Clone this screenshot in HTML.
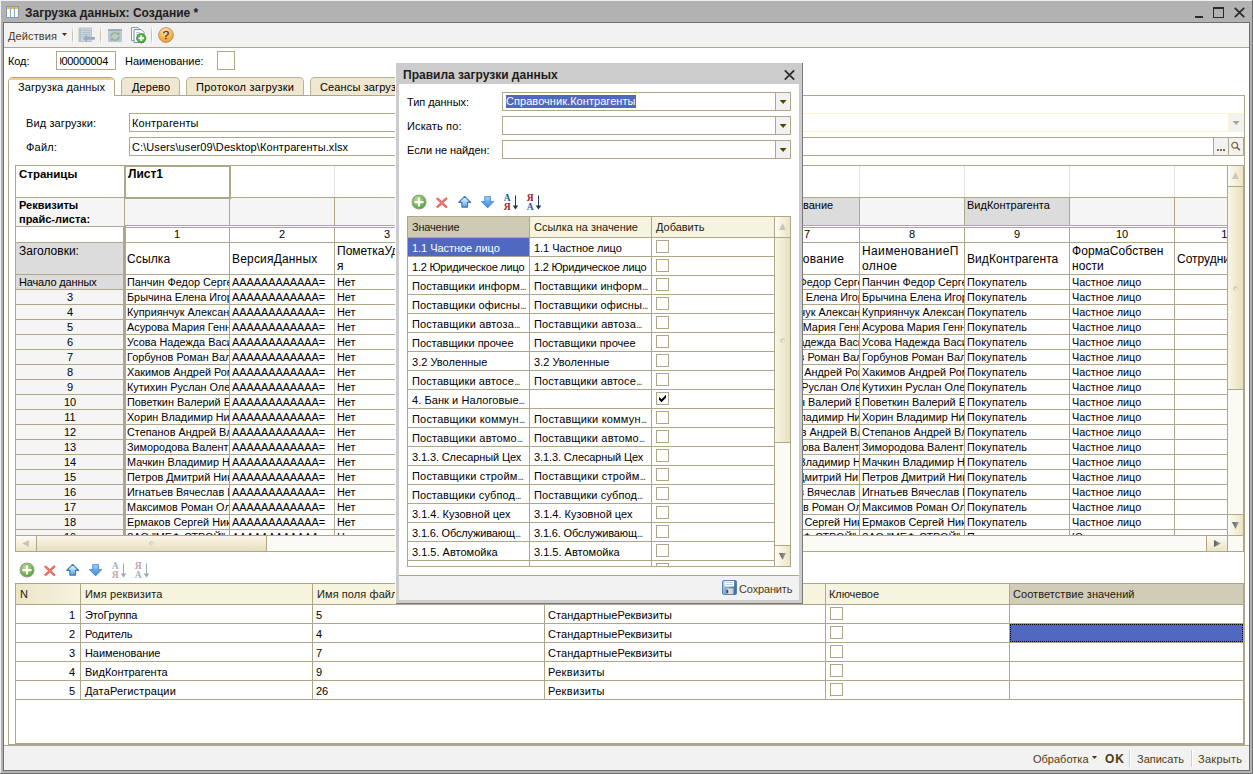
<!DOCTYPE html><html lang="ru"><head><meta charset="utf-8"><title>1C</title><style>
html,body{margin:0;padding:0}
body{width:1253px;height:774px;overflow:hidden;background:#b2b2b2;font-family:"Liberation Sans",sans-serif;font-size:11px;color:#000}
#root{position:relative;width:1253px;height:774px;overflow:hidden;background:#b2b2b2}
#root div,#root svg{position:absolute;box-sizing:content-box}
.t{white-space:nowrap}
</style></head><body><div id="root">
<div style="left:0px;top:0px;width:1253px;height:1px;background:#f0f0f0"></div>
<div style="left:0px;top:0px;width:1px;height:774px;background:#f0f0f0"></div>
<div style="left:1252px;top:0px;width:1px;height:774px;background:#6e6e6e"></div>
<div style="left:0px;top:773px;width:1253px;height:1px;background:#6e6e6e"></div>
<svg style="left:6px;top:6px" width="13" height="12" viewBox="0 0 13 12">
<rect x="0.5" y="0.5" width="12" height="11" fill="#f4f8fc" stroke="#8a98a6" stroke-width="1"/>
<rect x="1" y="1" width="3" height="2" fill="#f2c21a"/><rect x="5" y="1" width="3" height="2" fill="#f2c21a"/><rect x="9" y="1" width="3" height="2" fill="#f2c21a"/>
<path d="M4.5 0.5v11M8.5 0.5v11" stroke="#9aa6b2" stroke-width="1"/></svg>
<div class="t" style="left:25px;top:5px;font-weight:bold;font-size:12px;line-height:16px;color:#1c1c1c">Загрузка данных: Создание *</div>
<div style="left:1195px;top:16px;width:8px;height:2px;background:#2a2a2a"></div>
<div style="left:1213px;top:7px;width:11px;height:11px;border:1px solid #2a2a2a;border-top-width:2px;box-sizing:border-box"></div>
<svg style="left:1233px;top:6px" width="13" height="13" viewBox="0 0 13 13"><path d="M1.8 1.8l9.4 9.4M11.2 1.8l-9.4 9.4" stroke="#2a2a2a" stroke-width="1.7"/></svg>
<div style="left:3px;top:22px;width:1245px;height:747px;border:1px solid #6e6e6e;background:#fff"></div>
<div style="left:4px;top:23px;width:1245px;height:24px;background:#f2f2f2"></div>
<div style="left:4px;top:47px;width:1245px;height:1px;background:#aea888"></div>
<div class="t" style="left:8px;top:28px;color:#4c3b12;line-height:16px;letter-spacing:0.114px">Действия</div>
<svg style="left:62px;top:33px" width="5" height="3"><path d="M0 0h5l-2.500 3z" fill="#4a3500"/></svg>
<div style="left:72px;top:26px;width:1px;height:19px;background:linear-gradient(180deg,#f2f2f2,#c9c2a0 35%,#c9c2a0 65%,#f2f2f2)"></div>
<div style="left:73px;top:27px;width:1px;height:17px;background:#fbfbfb"></div>
<div style="left:100px;top:26px;width:1px;height:19px;background:linear-gradient(180deg,#f2f2f2,#c9c2a0 35%,#c9c2a0 65%,#f2f2f2)"></div>
<div style="left:101px;top:27px;width:1px;height:17px;background:#fbfbfb"></div>
<div style="left:151px;top:26px;width:1px;height:19px;background:linear-gradient(180deg,#f2f2f2,#c9c2a0 35%,#c9c2a0 65%,#f2f2f2)"></div>
<div style="left:152px;top:27px;width:1px;height:17px;background:#fbfbfb"></div>
<svg style="left:78px;top:27px" width="18" height="17" viewBox="0 0 18 17">
<rect x="1" y="1" width="12.500" height="13.500" fill="#cdd6dd" stroke="#b3bec7" stroke-width="0.800"/>
<rect x="1" y="1" width="2" height="13.500" fill="#b5c1cb"/>
<path d="M3.500 3.500h9M3.500 5.500h9M3.500 7.500h9M3.500 9.500h9" stroke="#b0bcc6" stroke-width="0.900"/>
<path d="M17 10H9V7.600L5 11.400 9 15.200V12.800h8z" fill="#9bacb9"/></svg>
<svg style="left:108px;top:29px" width="14" height="13" viewBox="0 0 14 13">
<rect x="0" y="0" width="14" height="13" fill="#bfc8cf"/><rect x="0" y="0" width="14" height="2" fill="#9fadb8"/>
<path d="M2.800 7.600a4.200 3.800 0 0 1 7.400-2.300M11.200 7.400a4.200 3.800 0 0 1-7.400 2.300" stroke="#8db08d" stroke-width="1.300" fill="none"/>
<path d="M8.600 5.800l3.400 0-1.400-2.800zM5.400 9.200l-3.400 0 1.400 2.800z" fill="#8db08d"/></svg>
<svg style="left:130px;top:26px" width="17" height="18" viewBox="0 0 17 18">
<path d="M1.500 1.500h6.500l2.500 2.500v10.500h-9z" fill="#fff" stroke="#7f9bbb"/>
<path d="M4 3.500h7l3 3v10h-10z" fill="#fdfeff" stroke="#6f8db3"/>
<path d="M6 6.500h4M6 8.500h3" stroke="#b9c8d8"/>
<circle cx="11.200" cy="12.200" r="4.600" fill="#58b046" stroke="#3f8a33" stroke-width="0.900"/>
<path d="M11.200 9.400v5.600M8.400 12.200h5.600" stroke="#fff" stroke-width="1.900"/></svg>
<svg style="left:158px;top:27px" width="16" height="16" viewBox="0 0 16 16">
<defs><radialGradient id="gh" cx="0.450" cy="0.250" r="0.850"><stop offset="0" stop-color="#fde9c4"/><stop offset="0.500" stop-color="#f6b85a"/><stop offset="1" stop-color="#e8962a"/></radialGradient></defs>
<circle cx="8" cy="8" r="7.400" fill="url(#gh)" stroke="#b58748" stroke-width="0.800"/>
<text x="8" y="12" text-anchor="middle" font-family="Liberation Sans" font-size="11.500" fill="#5a3510" stroke="#5a3510" stroke-width="0.300">?</text></svg>
<div class="t" style="left:8px;top:54px;line-height:14px;letter-spacing:-0.089px">Код:</div>
<div style="left:56px;top:51px;width:58px;height:17px;border:1px solid #aea888;background:#fff;overflow:hidden"><div style="left:3px;top:0;width:55px;height:17px;overflow:hidden"><div class="t" style="right:7px;top:2px;line-height:14px;font-size:11px;letter-spacing:-0.300px">000000004</div></div></div>
<div class="t" style="left:125px;top:54px;line-height:14px;letter-spacing:-0.068px">Наименование:</div>
<div style="left:217px;top:51px;width:16px;height:17px;border:1px solid #aea888;background:#fff"></div>
<div style="left:8px;top:95px;width:1235px;height:648px;border:1px solid #aea888;background:#fff"></div>
<div style="left:121px;top:77px;width:57px;height:17px;border:1px solid #b9b291;border-bottom:none;border-radius:5px 5px 0 0;background:#eee8d2"><div class="t" style="left:10px;top:2px;line-height:14px;letter-spacing:0.072px">Дерево</div></div>
<div style="left:186px;top:77px;width:116px;height:17px;border:1px solid #b9b291;border-bottom:none;border-radius:5px 5px 0 0;background:#eee8d2"><div class="t" style="left:9px;top:2px;line-height:14px;letter-spacing:0.257px">Протокол загрузки</div></div>
<div style="left:310px;top:77px;width:138px;height:17px;border:1px solid #b9b291;border-bottom:none;border-radius:5px 5px 0 0;background:#eee8d2"><div class="t" style="left:9px;top:2px;line-height:14px;letter-spacing:0.13px">Сеансы загрузки</div></div>
<div style="left:8px;top:77px;width:105px;height:18px;border:1px solid #aea888;border-bottom:none;border-radius:5px 5px 0 0;background:#fff;overflow:hidden"><div style="left:0;top:0;width:107px;height:2px;background:#f6cf7e"></div><div class="t" style="left:9px;top:2px;line-height:14px;letter-spacing:0.097px">Загрузка данных</div></div>
<div class="t" style="left:26px;top:116px;line-height:14px;letter-spacing:0.109px">Вид загрузки:</div>
<div style="left:129px;top:113px;width:1113px;height:17px;border:1px solid #fdf3cf;background:#fff"></div>
<div style="left:129px;top:113px;width:300px;height:17px;border:1px solid #aea888;border-right:none;background:#fff"></div>
<div class="t" style="left:132px;top:116px;line-height:14px;letter-spacing:0.172px">Контрагенты</div>
<div style="left:1228px;top:114px;width:14px;height:17px;background:#f2f2f2;border-left:1px solid #fdf3cf"><svg width="14" height="17" style="left:0;top:0"><path d="M3.600 7.0h7l-3.500 4z" fill="#aaa692"/></svg></div>
<div class="t" style="left:26px;top:140px;line-height:14px;letter-spacing:0.223px">Файл:</div>
<div style="left:129px;top:137px;width:1113px;height:17px;border:1px solid #aea888;background:#fff"></div>
<div class="t" style="left:132px;top:140px;line-height:14px;letter-spacing:0.084px">C:\Users\user09\Desktop\Контрагенты.xlsx</div>
<div style="left:1213px;top:138px;width:14px;height:17px;background:#f2f2f2;border-left:1px solid #aea888"><div style="left:3px;top:11px;width:2px;height:2px;background:#8a6a30"></div><div style="left:6px;top:11px;width:2px;height:2px;background:#8a6a30"></div><div style="left:9px;top:11px;width:2px;height:2px;background:#8a6a30"></div></div>
<div style="left:1228px;top:138px;width:14px;height:17px;background:#f2f2f2;border-left:1px solid #aea888"><svg width="14" height="17" style="left:0;top:0"><circle cx="5.700" cy="7.200" r="2.900" fill="#fbfaf6" stroke="#8a6230" stroke-width="1.200"/><path d="M7.900 9.400l3 2.700" stroke="#8a6230" stroke-width="1.700"/></svg></div>
<div style="left:15px;top:165px;width:1227px;height:385px;border:1px solid #aea888;background:#fff"></div>
<div style="left:16px;top:166px;width:1211px;height:369px;overflow:hidden;background:#fff">
<div style="left:0px;top:32px;width:1212px;height:27px;background:#f5f5f5"></div>
<div style="left:0px;top:32px;width:107px;height:28px;background:#f5f5f5"></div>
<div style="left:0px;top:124px;width:107px;height:300px;background:#f5f5f5"></div>
<div style="left:0px;top:77px;width:107px;height:46px;background:#dcdcdc"></div>
<div style="left:739px;top:32px;width:104px;height:27px;background:#dcdcdc"></div>
<div style="left:949px;top:32px;width:104px;height:27px;background:#dcdcdc"></div>
<div style="left:0px;top:31px;width:1212px;height:1px;background:#aea888"></div>
<div style="left:108px;top:59px;width:1212px;height:1px;background:#aea888"></div>
<div style="left:0px;top:60px;width:108px;height:1px;background:#aea888"></div>
<div style="left:108px;top:61px;width:1212px;height:1px;background:#aea888"></div>
<div style="left:0px;top:76px;width:1212px;height:1px;background:#aea888"></div>
<div style="left:108px;top:108px;width:1212px;height:1px;background:#aea888"></div>
<div style="left:0px;top:108px;width:108px;height:1px;background:#aea888"></div>
<div style="left:0px;top:123px;width:1212px;height:1px;background:#aea888"></div>
<div style="left:0px;top:138px;width:1212px;height:1px;background:#aea888"></div>
<div style="left:0px;top:153px;width:1212px;height:1px;background:#aea888"></div>
<div style="left:0px;top:168px;width:1212px;height:1px;background:#aea888"></div>
<div style="left:0px;top:183px;width:1212px;height:1px;background:#aea888"></div>
<div style="left:0px;top:198px;width:1212px;height:1px;background:#aea888"></div>
<div style="left:0px;top:213px;width:1212px;height:1px;background:#aea888"></div>
<div style="left:0px;top:228px;width:1212px;height:1px;background:#aea888"></div>
<div style="left:0px;top:243px;width:1212px;height:1px;background:#aea888"></div>
<div style="left:0px;top:258px;width:1212px;height:1px;background:#aea888"></div>
<div style="left:0px;top:273px;width:1212px;height:1px;background:#aea888"></div>
<div style="left:0px;top:288px;width:1212px;height:1px;background:#aea888"></div>
<div style="left:0px;top:303px;width:1212px;height:1px;background:#aea888"></div>
<div style="left:0px;top:318px;width:1212px;height:1px;background:#aea888"></div>
<div style="left:0px;top:333px;width:1212px;height:1px;background:#aea888"></div>
<div style="left:0px;top:348px;width:1212px;height:1px;background:#aea888"></div>
<div style="left:0px;top:363px;width:1212px;height:1px;background:#aea888"></div>
<div style="left:213px;top:0px;width:1px;height:31px;background:#e2e2e2"></div>
<div style="left:213px;top:32px;width:1px;height:27px;background:#aea888"></div>
<div style="left:213px;top:61px;width:1px;height:320px;background:#aea888"></div>
<div style="left:318px;top:0px;width:1px;height:31px;background:#e2e2e2"></div>
<div style="left:318px;top:32px;width:1px;height:27px;background:#aea888"></div>
<div style="left:318px;top:61px;width:1px;height:320px;background:#aea888"></div>
<div style="left:423px;top:0px;width:1px;height:31px;background:#e2e2e2"></div>
<div style="left:423px;top:32px;width:1px;height:27px;background:#aea888"></div>
<div style="left:423px;top:61px;width:1px;height:320px;background:#aea888"></div>
<div style="left:528px;top:0px;width:1px;height:31px;background:#e2e2e2"></div>
<div style="left:528px;top:32px;width:1px;height:27px;background:#aea888"></div>
<div style="left:528px;top:61px;width:1px;height:320px;background:#aea888"></div>
<div style="left:633px;top:0px;width:1px;height:31px;background:#e2e2e2"></div>
<div style="left:633px;top:32px;width:1px;height:27px;background:#aea888"></div>
<div style="left:633px;top:61px;width:1px;height:320px;background:#aea888"></div>
<div style="left:738px;top:0px;width:1px;height:31px;background:#e2e2e2"></div>
<div style="left:738px;top:32px;width:1px;height:27px;background:#aea888"></div>
<div style="left:738px;top:61px;width:1px;height:320px;background:#aea888"></div>
<div style="left:843px;top:0px;width:1px;height:31px;background:#e2e2e2"></div>
<div style="left:843px;top:32px;width:1px;height:27px;background:#aea888"></div>
<div style="left:843px;top:61px;width:1px;height:320px;background:#aea888"></div>
<div style="left:948px;top:0px;width:1px;height:31px;background:#e2e2e2"></div>
<div style="left:948px;top:32px;width:1px;height:27px;background:#aea888"></div>
<div style="left:948px;top:61px;width:1px;height:320px;background:#aea888"></div>
<div style="left:1053px;top:0px;width:1px;height:31px;background:#e2e2e2"></div>
<div style="left:1053px;top:32px;width:1px;height:27px;background:#aea888"></div>
<div style="left:1053px;top:61px;width:1px;height:320px;background:#aea888"></div>
<div style="left:1158px;top:0px;width:1px;height:31px;background:#e2e2e2"></div>
<div style="left:1158px;top:32px;width:1px;height:27px;background:#aea888"></div>
<div style="left:1158px;top:61px;width:1px;height:320px;background:#aea888"></div>
<div style="left:1263px;top:0px;width:1px;height:31px;background:#e2e2e2"></div>
<div style="left:1263px;top:32px;width:1px;height:27px;background:#aea888"></div>
<div style="left:1263px;top:61px;width:1px;height:320px;background:#aea888"></div>
<div style="left:107px;top:60px;width:3px;height:320px;background:#aea888"></div>
<div style="left:108px;top:32px;width:1px;height:28px;background:#aea888"></div>
<div style="left:108px;top:-1px;width:103px;height:30px;border:2px solid #aea888;background:#fff"></div>
<div class="t" style="left:3px;top:1px;font-weight:bold;font-size:11.500px;line-height:15px">Страницы</div>
<div class="t" style="left:112px;top:1px;font-weight:bold;font-size:12px;line-height:15px">Лист1</div>
<div class="t" style="left:3px;top:32px;font-weight:bold;font-size:11px;line-height:14px">Реквизиты<br>прайс-листа:</div>
<div class="t" style="left:3px;top:78px;font-size:12px;line-height:15px">Заголовки:</div>
<div class="t" style="left:3px;top:109px;font-size:11px;line-height:14px;letter-spacing:-0.15px">Начало данных</div>
<div class="t" style="left:739px;top:33px;width:103px;font-size:11px;line-height:14px;text-align:right;overflow:hidden;direction:rtl"></div>
<div class="t" style="left:951px;top:32px;font-size:11px;line-height:14px">ВидКонтрагента</div>
<div class="t" style="left:787px;top:32px;font-size:11px;line-height:14px">вание</div>
<div class="t" style="left:109px;top:61px;width:104px;text-align:center;font-size:11px;line-height:14px">1</div>
<div class="t" style="left:214px;top:61px;width:104px;text-align:center;font-size:11px;line-height:14px">2</div>
<div class="t" style="left:319px;top:61px;width:104px;text-align:center;font-size:11px;line-height:14px">3</div>
<div class="t" style="left:424px;top:61px;width:104px;text-align:center;font-size:11px;line-height:14px">4</div>
<div class="t" style="left:529px;top:61px;width:104px;text-align:center;font-size:11px;line-height:14px">5</div>
<div class="t" style="left:634px;top:61px;width:104px;text-align:center;font-size:11px;line-height:14px">6</div>
<div class="t" style="left:739px;top:61px;width:104px;text-align:center;font-size:11px;line-height:14px">7</div>
<div class="t" style="left:844px;top:61px;width:104px;text-align:center;font-size:11px;line-height:14px">8</div>
<div class="t" style="left:949px;top:61px;width:104px;text-align:center;font-size:11px;line-height:14px">9</div>
<div class="t" style="left:1054px;top:61px;width:104px;text-align:center;font-size:11px;line-height:14px">10</div>
<div class="t" style="left:1159px;top:61px;width:104px;text-align:center;font-size:11px;line-height:14px">11</div>
<div class="t" style="left:111px;top:86px;width:102px;overflow:hidden;font-size:12px;line-height:15px;letter-spacing:0.143px">Ссылка</div>
<div class="t" style="left:216px;top:86px;width:102px;overflow:hidden;font-size:12px;line-height:15px;letter-spacing:0.179px">ВерсияДанных</div>
<div class="t" style="left:321px;top:78px;width:102px;overflow:hidden;font-size:12px;line-height:15px;letter-spacing:0px">ПометкаУдалени<br>я</div>
<div class="t" style="left:426px;top:86px;width:102px;overflow:hidden;font-size:12px;line-height:15px;letter-spacing:0px"></div>
<div class="t" style="left:531px;top:86px;width:102px;overflow:hidden;font-size:12px;line-height:15px;letter-spacing:0px"></div>
<div class="t" style="left:636px;top:86px;width:102px;overflow:hidden;font-size:12px;line-height:15px;letter-spacing:0px"></div>
<div class="t" style="left:741px;top:86px;width:102px;overflow:hidden;font-size:12px;line-height:15px;letter-spacing:0.347px">Наименование</div>
<div class="t" style="left:846px;top:78px;width:102px;overflow:hidden;font-size:12px;line-height:15px;letter-spacing:0.374px">НаименованиеП<br>олное</div>
<div class="t" style="left:951px;top:86px;width:102px;overflow:hidden;font-size:12px;line-height:15px;letter-spacing:0.077px">ВидКонтрагента</div>
<div class="t" style="left:1056px;top:78px;width:102px;overflow:hidden;font-size:12px;line-height:15px;letter-spacing:0.082px">ФормаСобствен<br>ности</div>
<div class="t" style="left:1161px;top:86px;width:102px;overflow:hidden;font-size:12px;line-height:15px;letter-spacing:0px">Сотрудник</div>
<div class="t" style="left:111px;top:109px;width:102px;overflow:hidden;font-size:10.850px;line-height:14px;letter-spacing:0px">Панчин Федор Сергеевич</div>
<div class="t" style="left:216px;top:109px;width:102px;overflow:hidden;font-size:10.850px;line-height:14px;letter-spacing:0px">AAAAAAAAAAAA=</div>
<div class="t" style="left:321px;top:109px;width:102px;overflow:hidden;font-size:10.850px;line-height:14px;letter-spacing:0px">Нет</div>
<div style="left:739px;top:109px;width:104px;height:14px;overflow:hidden"><div class="t" style="left:3px;top:0;font-size:10.850px;line-height:14px">Панчин Федор Сергеевич</div></div>
<div class="t" style="left:846px;top:109px;width:102px;overflow:hidden;font-size:10.850px;line-height:14px;letter-spacing:0px">Панчин Федор Сергеевич</div>
<div class="t" style="left:951px;top:109px;width:102px;overflow:hidden;font-size:10.850px;line-height:14px;letter-spacing:0.191px">Покупатель</div>
<div class="t" style="left:1056px;top:109px;width:102px;overflow:hidden;font-size:10.850px;line-height:14px;letter-spacing:0px">Частное лицо</div>
<div class="t" style="left:0px;top:124px;width:108px;text-align:center;font-size:11px;line-height:14px">3</div>
<div class="t" style="left:111px;top:124px;width:102px;overflow:hidden;font-size:10.850px;line-height:14px;letter-spacing:0px">Брычина Елена Игоревна</div>
<div class="t" style="left:216px;top:124px;width:102px;overflow:hidden;font-size:10.850px;line-height:14px;letter-spacing:0px">AAAAAAAAAAAA=</div>
<div class="t" style="left:321px;top:124px;width:102px;overflow:hidden;font-size:10.850px;line-height:14px;letter-spacing:0px">Нет</div>
<div style="left:739px;top:124px;width:104px;height:14px;overflow:hidden"><div class="t" style="left:3px;top:0;font-size:10.850px;line-height:14px">Брычина Елена Игоревна</div></div>
<div class="t" style="left:846px;top:124px;width:102px;overflow:hidden;font-size:10.850px;line-height:14px;letter-spacing:0px">Брычина Елена Игоревна</div>
<div class="t" style="left:951px;top:124px;width:102px;overflow:hidden;font-size:10.850px;line-height:14px;letter-spacing:0.191px">Покупатель</div>
<div class="t" style="left:1056px;top:124px;width:102px;overflow:hidden;font-size:10.850px;line-height:14px;letter-spacing:0px">Частное лицо</div>
<div class="t" style="left:0px;top:139px;width:108px;text-align:center;font-size:11px;line-height:14px">4</div>
<div class="t" style="left:111px;top:139px;width:102px;overflow:hidden;font-size:10.850px;line-height:14px;letter-spacing:0px">Куприянчук Александр</div>
<div class="t" style="left:216px;top:139px;width:102px;overflow:hidden;font-size:10.850px;line-height:14px;letter-spacing:0px">AAAAAAAAAAAA=</div>
<div class="t" style="left:321px;top:139px;width:102px;overflow:hidden;font-size:10.850px;line-height:14px;letter-spacing:0px">Нет</div>
<div style="left:739px;top:139px;width:104px;height:14px;overflow:hidden"><div class="t" style="left:3px;top:0;font-size:10.850px;line-height:14px">Куприянчук Александр</div></div>
<div class="t" style="left:846px;top:139px;width:102px;overflow:hidden;font-size:10.850px;line-height:14px;letter-spacing:0px">Куприянчук Александр</div>
<div class="t" style="left:951px;top:139px;width:102px;overflow:hidden;font-size:10.850px;line-height:14px;letter-spacing:0.191px">Покупатель</div>
<div class="t" style="left:1056px;top:139px;width:102px;overflow:hidden;font-size:10.850px;line-height:14px;letter-spacing:0px">Частное лицо</div>
<div class="t" style="left:0px;top:154px;width:108px;text-align:center;font-size:11px;line-height:14px">5</div>
<div class="t" style="left:111px;top:154px;width:102px;overflow:hidden;font-size:10.850px;line-height:14px;letter-spacing:0px">Асурова Мария Геннадьевна</div>
<div class="t" style="left:216px;top:154px;width:102px;overflow:hidden;font-size:10.850px;line-height:14px;letter-spacing:0px">AAAAAAAAAAAA=</div>
<div class="t" style="left:321px;top:154px;width:102px;overflow:hidden;font-size:10.850px;line-height:14px;letter-spacing:0px">Нет</div>
<div style="left:739px;top:154px;width:104px;height:14px;overflow:hidden"><div class="t" style="left:3px;top:0;font-size:10.850px;line-height:14px">Асурова Мария Геннадьевна</div></div>
<div class="t" style="left:846px;top:154px;width:102px;overflow:hidden;font-size:10.850px;line-height:14px;letter-spacing:0px">Асурова Мария Геннадьевна</div>
<div class="t" style="left:951px;top:154px;width:102px;overflow:hidden;font-size:10.850px;line-height:14px;letter-spacing:0.191px">Покупатель</div>
<div class="t" style="left:1056px;top:154px;width:102px;overflow:hidden;font-size:10.850px;line-height:14px;letter-spacing:0px">Частное лицо</div>
<div class="t" style="left:0px;top:169px;width:108px;text-align:center;font-size:11px;line-height:14px">6</div>
<div class="t" style="left:111px;top:169px;width:102px;overflow:hidden;font-size:10.850px;line-height:14px;letter-spacing:0px">Усова Надежда Васильевна</div>
<div class="t" style="left:216px;top:169px;width:102px;overflow:hidden;font-size:10.850px;line-height:14px;letter-spacing:0px">AAAAAAAAAAAA=</div>
<div class="t" style="left:321px;top:169px;width:102px;overflow:hidden;font-size:10.850px;line-height:14px;letter-spacing:0px">Нет</div>
<div style="left:739px;top:169px;width:104px;height:14px;overflow:hidden"><div class="t" style="left:3px;top:0;font-size:10.850px;line-height:14px">Усова Надежда Васильевна</div></div>
<div class="t" style="left:846px;top:169px;width:102px;overflow:hidden;font-size:10.850px;line-height:14px;letter-spacing:0px">Усова Надежда Васильевна</div>
<div class="t" style="left:951px;top:169px;width:102px;overflow:hidden;font-size:10.850px;line-height:14px;letter-spacing:0.191px">Покупатель</div>
<div class="t" style="left:1056px;top:169px;width:102px;overflow:hidden;font-size:10.850px;line-height:14px;letter-spacing:0px">Частное лицо</div>
<div class="t" style="left:0px;top:184px;width:108px;text-align:center;font-size:11px;line-height:14px">7</div>
<div class="t" style="left:111px;top:184px;width:102px;overflow:hidden;font-size:10.850px;line-height:14px;letter-spacing:0px">Горбунов Роман Валерьевич</div>
<div class="t" style="left:216px;top:184px;width:102px;overflow:hidden;font-size:10.850px;line-height:14px;letter-spacing:0px">AAAAAAAAAAAA=</div>
<div class="t" style="left:321px;top:184px;width:102px;overflow:hidden;font-size:10.850px;line-height:14px;letter-spacing:0px">Нет</div>
<div style="left:739px;top:184px;width:104px;height:14px;overflow:hidden"><div class="t" style="left:3px;top:0;font-size:10.850px;line-height:14px">Горбунов Роман Валерьевич</div></div>
<div class="t" style="left:846px;top:184px;width:102px;overflow:hidden;font-size:10.850px;line-height:14px;letter-spacing:0px">Горбунов Роман Валерьевич</div>
<div class="t" style="left:951px;top:184px;width:102px;overflow:hidden;font-size:10.850px;line-height:14px;letter-spacing:0.191px">Покупатель</div>
<div class="t" style="left:1056px;top:184px;width:102px;overflow:hidden;font-size:10.850px;line-height:14px;letter-spacing:0px">Частное лицо</div>
<div class="t" style="left:0px;top:199px;width:108px;text-align:center;font-size:11px;line-height:14px">8</div>
<div class="t" style="left:111px;top:199px;width:102px;overflow:hidden;font-size:10.850px;line-height:14px;letter-spacing:0px">Хакимов Андрей Романович</div>
<div class="t" style="left:216px;top:199px;width:102px;overflow:hidden;font-size:10.850px;line-height:14px;letter-spacing:0px">AAAAAAAAAAAA=</div>
<div class="t" style="left:321px;top:199px;width:102px;overflow:hidden;font-size:10.850px;line-height:14px;letter-spacing:0px">Нет</div>
<div style="left:739px;top:199px;width:104px;height:14px;overflow:hidden"><div class="t" style="left:3px;top:0;font-size:10.850px;line-height:14px">Хакимов Андрей Романович</div></div>
<div class="t" style="left:846px;top:199px;width:102px;overflow:hidden;font-size:10.850px;line-height:14px;letter-spacing:0px">Хакимов Андрей Романович</div>
<div class="t" style="left:951px;top:199px;width:102px;overflow:hidden;font-size:10.850px;line-height:14px;letter-spacing:0.191px">Покупатель</div>
<div class="t" style="left:1056px;top:199px;width:102px;overflow:hidden;font-size:10.850px;line-height:14px;letter-spacing:0px">Частное лицо</div>
<div class="t" style="left:0px;top:214px;width:108px;text-align:center;font-size:11px;line-height:14px">9</div>
<div class="t" style="left:111px;top:214px;width:102px;overflow:hidden;font-size:10.850px;line-height:14px;letter-spacing:0px">Кутихин Руслан Олегович</div>
<div class="t" style="left:216px;top:214px;width:102px;overflow:hidden;font-size:10.850px;line-height:14px;letter-spacing:0px">AAAAAAAAAAAA=</div>
<div class="t" style="left:321px;top:214px;width:102px;overflow:hidden;font-size:10.850px;line-height:14px;letter-spacing:0px">Нет</div>
<div style="left:739px;top:214px;width:104px;height:14px;overflow:hidden"><div class="t" style="left:3px;top:0;font-size:10.850px;line-height:14px">Кутихин Руслан Олегович</div></div>
<div class="t" style="left:846px;top:214px;width:102px;overflow:hidden;font-size:10.850px;line-height:14px;letter-spacing:0px">Кутихин Руслан Олегович</div>
<div class="t" style="left:951px;top:214px;width:102px;overflow:hidden;font-size:10.850px;line-height:14px;letter-spacing:0.191px">Покупатель</div>
<div class="t" style="left:1056px;top:214px;width:102px;overflow:hidden;font-size:10.850px;line-height:14px;letter-spacing:0px">Частное лицо</div>
<div class="t" style="left:0px;top:229px;width:108px;text-align:center;font-size:11px;line-height:14px">10</div>
<div class="t" style="left:111px;top:229px;width:102px;overflow:hidden;font-size:10.850px;line-height:14px;letter-spacing:0px">Поветкин Валерий Евгеньевич</div>
<div class="t" style="left:216px;top:229px;width:102px;overflow:hidden;font-size:10.850px;line-height:14px;letter-spacing:0px">AAAAAAAAAAAA=</div>
<div class="t" style="left:321px;top:229px;width:102px;overflow:hidden;font-size:10.850px;line-height:14px;letter-spacing:0px">Нет</div>
<div style="left:739px;top:229px;width:104px;height:14px;overflow:hidden"><div class="t" style="left:3px;top:0;font-size:10.850px;line-height:14px">Поветкин Валерий Евгеньевич</div></div>
<div class="t" style="left:846px;top:229px;width:102px;overflow:hidden;font-size:10.850px;line-height:14px;letter-spacing:0px">Поветкин Валерий Евгеньевич</div>
<div class="t" style="left:951px;top:229px;width:102px;overflow:hidden;font-size:10.850px;line-height:14px;letter-spacing:0.191px">Покупатель</div>
<div class="t" style="left:1056px;top:229px;width:102px;overflow:hidden;font-size:10.850px;line-height:14px;letter-spacing:0px">Частное лицо</div>
<div class="t" style="left:0px;top:244px;width:108px;text-align:center;font-size:11px;line-height:14px">11</div>
<div class="t" style="left:111px;top:244px;width:102px;overflow:hidden;font-size:10.850px;line-height:14px;letter-spacing:0px">Хорин Владимир Николаевич</div>
<div class="t" style="left:216px;top:244px;width:102px;overflow:hidden;font-size:10.850px;line-height:14px;letter-spacing:0px">AAAAAAAAAAAA=</div>
<div class="t" style="left:321px;top:244px;width:102px;overflow:hidden;font-size:10.850px;line-height:14px;letter-spacing:0px">Нет</div>
<div style="left:739px;top:244px;width:104px;height:14px;overflow:hidden"><div class="t" style="left:3px;top:0;font-size:10.850px;line-height:14px">Хорин Владимир Николаевич</div></div>
<div class="t" style="left:846px;top:244px;width:102px;overflow:hidden;font-size:10.850px;line-height:14px;letter-spacing:0px">Хорин Владимир Николаевич</div>
<div class="t" style="left:951px;top:244px;width:102px;overflow:hidden;font-size:10.850px;line-height:14px;letter-spacing:0.191px">Покупатель</div>
<div class="t" style="left:1056px;top:244px;width:102px;overflow:hidden;font-size:10.850px;line-height:14px;letter-spacing:0px">Частное лицо</div>
<div class="t" style="left:0px;top:259px;width:108px;text-align:center;font-size:11px;line-height:14px">12</div>
<div class="t" style="left:111px;top:259px;width:102px;overflow:hidden;font-size:10.850px;line-height:14px;letter-spacing:0px">Степанов Андрей Владимирович</div>
<div class="t" style="left:216px;top:259px;width:102px;overflow:hidden;font-size:10.850px;line-height:14px;letter-spacing:0px">AAAAAAAAAAAA=</div>
<div class="t" style="left:321px;top:259px;width:102px;overflow:hidden;font-size:10.850px;line-height:14px;letter-spacing:0px">Нет</div>
<div style="left:739px;top:259px;width:104px;height:14px;overflow:hidden"><div class="t" style="left:3px;top:0;font-size:10.850px;line-height:14px">Степанов Андрей Владимирович</div></div>
<div class="t" style="left:846px;top:259px;width:102px;overflow:hidden;font-size:10.850px;line-height:14px;letter-spacing:0px">Степанов Андрей Владимирович</div>
<div class="t" style="left:951px;top:259px;width:102px;overflow:hidden;font-size:10.850px;line-height:14px;letter-spacing:0.191px">Покупатель</div>
<div class="t" style="left:1056px;top:259px;width:102px;overflow:hidden;font-size:10.850px;line-height:14px;letter-spacing:0px">Частное лицо</div>
<div class="t" style="left:0px;top:274px;width:108px;text-align:center;font-size:11px;line-height:14px">13</div>
<div class="t" style="left:111px;top:274px;width:102px;overflow:hidden;font-size:10.850px;line-height:14px;letter-spacing:0px">Зимородова Валентина</div>
<div class="t" style="left:216px;top:274px;width:102px;overflow:hidden;font-size:10.850px;line-height:14px;letter-spacing:0px">AAAAAAAAAAAA=</div>
<div class="t" style="left:321px;top:274px;width:102px;overflow:hidden;font-size:10.850px;line-height:14px;letter-spacing:0px">Нет</div>
<div style="left:739px;top:274px;width:104px;height:14px;overflow:hidden"><div class="t" style="left:3px;top:0;font-size:10.850px;line-height:14px">Зимородова Валентина</div></div>
<div class="t" style="left:846px;top:274px;width:102px;overflow:hidden;font-size:10.850px;line-height:14px;letter-spacing:0px">Зимородова Валентина</div>
<div class="t" style="left:951px;top:274px;width:102px;overflow:hidden;font-size:10.850px;line-height:14px;letter-spacing:0.191px">Покупатель</div>
<div class="t" style="left:1056px;top:274px;width:102px;overflow:hidden;font-size:10.850px;line-height:14px;letter-spacing:0px">Частное лицо</div>
<div class="t" style="left:0px;top:289px;width:108px;text-align:center;font-size:11px;line-height:14px">14</div>
<div class="t" style="left:111px;top:289px;width:102px;overflow:hidden;font-size:10.850px;line-height:14px;letter-spacing:0px">Мачкин Владимир Николаевич</div>
<div class="t" style="left:216px;top:289px;width:102px;overflow:hidden;font-size:10.850px;line-height:14px;letter-spacing:0px">AAAAAAAAAAAA=</div>
<div class="t" style="left:321px;top:289px;width:102px;overflow:hidden;font-size:10.850px;line-height:14px;letter-spacing:0px">Нет</div>
<div style="left:739px;top:289px;width:104px;height:14px;overflow:hidden"><div class="t" style="left:3px;top:0;font-size:10.850px;line-height:14px">Мачкин Владимир Николаевич</div></div>
<div class="t" style="left:846px;top:289px;width:102px;overflow:hidden;font-size:10.850px;line-height:14px;letter-spacing:0px">Мачкин Владимир Николаевич</div>
<div class="t" style="left:951px;top:289px;width:102px;overflow:hidden;font-size:10.850px;line-height:14px;letter-spacing:0.191px">Покупатель</div>
<div class="t" style="left:1056px;top:289px;width:102px;overflow:hidden;font-size:10.850px;line-height:14px;letter-spacing:0px">Частное лицо</div>
<div class="t" style="left:0px;top:304px;width:108px;text-align:center;font-size:11px;line-height:14px">15</div>
<div class="t" style="left:111px;top:304px;width:102px;overflow:hidden;font-size:10.850px;line-height:14px;letter-spacing:0px">Петров Дмитрий Николаевич</div>
<div class="t" style="left:216px;top:304px;width:102px;overflow:hidden;font-size:10.850px;line-height:14px;letter-spacing:0px">AAAAAAAAAAAA=</div>
<div class="t" style="left:321px;top:304px;width:102px;overflow:hidden;font-size:10.850px;line-height:14px;letter-spacing:0px">Нет</div>
<div style="left:739px;top:304px;width:104px;height:14px;overflow:hidden"><div class="t" style="left:3px;top:0;font-size:10.850px;line-height:14px">Петров Дмитрий Николаевич</div></div>
<div class="t" style="left:846px;top:304px;width:102px;overflow:hidden;font-size:10.850px;line-height:14px;letter-spacing:0px">Петров Дмитрий Николаевич</div>
<div class="t" style="left:951px;top:304px;width:102px;overflow:hidden;font-size:10.850px;line-height:14px;letter-spacing:0.191px">Покупатель</div>
<div class="t" style="left:1056px;top:304px;width:102px;overflow:hidden;font-size:10.850px;line-height:14px;letter-spacing:0px">Частное лицо</div>
<div class="t" style="left:0px;top:319px;width:108px;text-align:center;font-size:11px;line-height:14px">16</div>
<div class="t" style="left:111px;top:319px;width:102px;overflow:hidden;font-size:10.850px;line-height:14px;letter-spacing:0px">Игнатьев Вячеслав Иванович</div>
<div class="t" style="left:216px;top:319px;width:102px;overflow:hidden;font-size:10.850px;line-height:14px;letter-spacing:0px">AAAAAAAAAAAA=</div>
<div class="t" style="left:321px;top:319px;width:102px;overflow:hidden;font-size:10.850px;line-height:14px;letter-spacing:0px">Нет</div>
<div style="left:739px;top:319px;width:104px;height:14px;overflow:hidden"><div class="t" style="left:3px;top:0;font-size:10.850px;line-height:14px">Игнатьев Вячеслав Иванович</div></div>
<div class="t" style="left:846px;top:319px;width:102px;overflow:hidden;font-size:10.850px;line-height:14px;letter-spacing:0px">Игнатьев Вячеслав Иванович</div>
<div class="t" style="left:951px;top:319px;width:102px;overflow:hidden;font-size:10.850px;line-height:14px;letter-spacing:0.191px">Покупатель</div>
<div class="t" style="left:1056px;top:319px;width:102px;overflow:hidden;font-size:10.850px;line-height:14px;letter-spacing:0px">Частное лицо</div>
<div class="t" style="left:0px;top:334px;width:108px;text-align:center;font-size:11px;line-height:14px">17</div>
<div class="t" style="left:111px;top:334px;width:102px;overflow:hidden;font-size:10.850px;line-height:14px;letter-spacing:0px">Максимов Роман Олегович</div>
<div class="t" style="left:216px;top:334px;width:102px;overflow:hidden;font-size:10.850px;line-height:14px;letter-spacing:0px">AAAAAAAAAAAA=</div>
<div class="t" style="left:321px;top:334px;width:102px;overflow:hidden;font-size:10.850px;line-height:14px;letter-spacing:0px">Нет</div>
<div style="left:739px;top:334px;width:104px;height:14px;overflow:hidden"><div class="t" style="left:3px;top:0;font-size:10.850px;line-height:14px">Максимов Роман Олегович</div></div>
<div class="t" style="left:846px;top:334px;width:102px;overflow:hidden;font-size:10.850px;line-height:14px;letter-spacing:0px">Максимов Роман Олегович</div>
<div class="t" style="left:951px;top:334px;width:102px;overflow:hidden;font-size:10.850px;line-height:14px;letter-spacing:0.191px">Покупатель</div>
<div class="t" style="left:1056px;top:334px;width:102px;overflow:hidden;font-size:10.850px;line-height:14px;letter-spacing:0px">Частное лицо</div>
<div class="t" style="left:0px;top:349px;width:108px;text-align:center;font-size:11px;line-height:14px">18</div>
<div class="t" style="left:111px;top:349px;width:102px;overflow:hidden;font-size:10.850px;line-height:14px;letter-spacing:0px">Ермаков Сергей Николаевич</div>
<div class="t" style="left:216px;top:349px;width:102px;overflow:hidden;font-size:10.850px;line-height:14px;letter-spacing:0px">AAAAAAAAAAAA=</div>
<div class="t" style="left:321px;top:349px;width:102px;overflow:hidden;font-size:10.850px;line-height:14px;letter-spacing:0px">Нет</div>
<div style="left:739px;top:349px;width:104px;height:14px;overflow:hidden"><div class="t" style="left:3px;top:0;font-size:10.850px;line-height:14px">Ермаков Сергей Николаевич</div></div>
<div class="t" style="left:846px;top:349px;width:102px;overflow:hidden;font-size:10.850px;line-height:14px;letter-spacing:0px">Ермаков Сергей Николаевич</div>
<div class="t" style="left:951px;top:349px;width:102px;overflow:hidden;font-size:10.850px;line-height:14px;letter-spacing:0.191px">Покупатель</div>
<div class="t" style="left:1056px;top:349px;width:102px;overflow:hidden;font-size:10.850px;line-height:14px;letter-spacing:0px">Частное лицо</div>
<div class="t" style="left:0px;top:364px;width:108px;text-align:center;font-size:11px;line-height:14px">19</div>
<div class="t" style="left:111px;top:364px;width:102px;overflow:hidden;font-size:10.850px;line-height:14px;letter-spacing:0px">ЗАО "МЕФ-СТРОЙ"</div>
<div class="t" style="left:216px;top:364px;width:102px;overflow:hidden;font-size:10.850px;line-height:14px;letter-spacing:0px">AAAAAAAAAAAA=</div>
<div class="t" style="left:321px;top:364px;width:102px;overflow:hidden;font-size:10.850px;line-height:14px;letter-spacing:0px">Нет</div>
<div style="left:739px;top:364px;width:104px;height:14px;overflow:hidden"><div class="t" style="left:3px;top:0;font-size:10.850px;line-height:14px">ЗАО "МЕФ-СТРОЙ"</div></div>
<div class="t" style="left:846px;top:364px;width:102px;overflow:hidden;font-size:10.850px;line-height:14px;letter-spacing:0px">ЗАО "МЕФ-СТРОЙ"</div>
<div class="t" style="left:951px;top:364px;width:102px;overflow:hidden;font-size:10.850px;line-height:14px;letter-spacing:0px">Поставщик</div>
<div class="t" style="left:1056px;top:364px;width:102px;overflow:hidden;font-size:10.850px;line-height:14px;letter-spacing:0px">Юридическое лицо</div>
</div>
<div style="left:1227px;top:166px;width:15px;height:369px;background:#fbfaf4;border-left:1px solid #aea888"></div>
<div style="left:1228px;top:166px;width:15px;height:20px;background:linear-gradient(90deg,#fdfcf6,#f3efd8 55%,#ebe4c6)"><svg width="15" height="20" style="left:0;top:0"><path d="M4 13h7l-3.500-7z" fill="#cac6ba"/></svg></div>
<div style="left:1228px;top:186px;width:15px;height:1px;background:#aea888"></div>
<div style="left:1228px;top:187px;width:15px;height:202px;background:linear-gradient(90deg,#f9f5e8,#f1ecd0 50%,#e6dec0)"></div>
<svg style="left:1233px;top:286px" width="5" height="5"><circle cx="2.500" cy="2.500" r="2.300" fill="#d0cbb8"/><circle cx="3.100" cy="3.100" r="1.300" fill="#efead6"/></svg>
<div style="left:1228px;top:389px;width:15px;height:1px;background:#aea888"></div>
<div style="left:1228px;top:514px;width:15px;height:1px;background:#aea888"></div>
<div style="left:1228px;top:515px;width:15px;height:20px;background:linear-gradient(90deg,#fdfcf6,#f3efd8 55%,#ebe4c6)"><svg width="15" height="20" style="left:0;top:0"><defs><linearGradient id="gtd" x1="0" y1="0" x2="1" y2="0"><stop offset="0" stop-color="#5c5c5c"/><stop offset="1" stop-color="#a8a8a8"/></linearGradient></defs><path d="M4 7h7l-3.500 7z" fill="url(#gtd)"/></svg></div>
<div style="left:16px;top:535px;width:1227px;height:1px;background:#aea888"></div>
<div style="left:16px;top:536px;width:1227px;height:15px;background:#fbfaf4"></div>
<div style="left:16px;top:536px;width:20px;height:15px;background:linear-gradient(180deg,#fdfcf6,#f3efd8 55%,#ebe4c6)"><svg width="20" height="15" style="left:0;top:0"><path d="M13 4v7l-7-3.500z" fill="#cac6ba"/></svg></div>
<div style="left:36px;top:536px;width:1px;height:15px;background:#aea888"></div>
<div style="left:37px;top:536px;width:229px;height:15px;background:linear-gradient(180deg,#fbf6ea,#f1ebd2 50%,#e6dec0)"></div>
<svg style="left:149px;top:541px" width="5" height="5"><circle cx="2.500" cy="2.500" r="2.300" fill="#d0cbb8"/><circle cx="3.100" cy="3.100" r="1.300" fill="#efead6"/></svg>
<div style="left:266px;top:536px;width:1px;height:15px;background:#aea888"></div>
<div style="left:1206px;top:536px;width:1px;height:15px;background:#aea888"></div>
<div style="left:1207px;top:536px;width:20px;height:15px;background:linear-gradient(180deg,#fdfcf6,#f3efd8 55%,#ebe4c6)"><svg width="20" height="15" style="left:0;top:0"><defs><linearGradient id="gtr" x1="0" y1="0" x2="1" y2="0"><stop offset="0" stop-color="#5c5c5c"/><stop offset="1" stop-color="#a8a8a8"/></linearGradient></defs><path d="M7 4v7l7-3.500z" fill="url(#gtr)"/></svg></div>
<div style="left:1227px;top:536px;width:1px;height:15px;background:#aea888"></div>
<svg style="left:19px;top:562px" width="16" height="16" viewBox="0 0 16 16">
<defs><radialGradient id="gp19562" cx="0.420" cy="0.350" r="0.750"><stop offset="0" stop-color="#c4e6a0"/><stop offset="0.550" stop-color="#78b956"/><stop offset="1" stop-color="#4f8f38"/></radialGradient></defs>
<circle cx="8" cy="8" r="7" fill="url(#gp19562)" stroke="#93a08b" stroke-width="1.100"/>
<path d="M8 4.400v7.400M4.300 8.100h7.400" stroke="#fff" stroke-width="2.100" stroke-linecap="round"/></svg>
<svg style="left:42px;top:562px" width="16" height="16" viewBox="0 0 16 16">
<path d="M3.500 4.700l8.700 8.100M12.200 4.700l-8.700 8.100" stroke="#e2554b" stroke-width="2.300" stroke-linecap="round"/>
<path d="M3.700 4.700l8.300 7.900M12 4.700l-8.300 7.900" stroke="#f59a92" stroke-width="0.900" stroke-linecap="round"/></svg>
<svg style="left:65px;top:562px" width="16" height="16" viewBox="0 0 16 16">
<defs><linearGradient id="gu65562" x1="0" y1="0" x2="0" y2="1"><stop offset="0" stop-color="#f2f9ff"/><stop offset="0.550" stop-color="#a9d2f5"/><stop offset="1" stop-color="#4f9de0"/></linearGradient></defs>
<path d="M7.700 2.300L13.700 8.400H10.500V13.100H4.900V8.400H1.700Z" fill="url(#gu65562)" stroke="#3379bd" stroke-width="1.100" stroke-linejoin="round"/></svg>
<svg style="left:88px;top:562px" width="16" height="16" viewBox="0 0 16 16">
<defs><linearGradient id="gd88562" x1="0" y1="0" x2="0" y2="1"><stop offset="0" stop-color="#b4dafa"/><stop offset="0.500" stop-color="#62a9ea"/><stop offset="1" stop-color="#3f8bd8"/></linearGradient></defs>
<path d="M7.600 13.900L13.700 7.600H10.400V2.700H4.800V7.600H1.500Z" fill="url(#gd88562)" stroke="#4a8ccc" stroke-width="1" stroke-linejoin="round"/></svg>
<svg style="left:111px;top:561px" width="17" height="18" viewBox="0 0 17 18">
<text x="0.700" y="7.800" font-family="Liberation Serif" font-weight="bold" font-size="9.500" fill="#9fb2c0">A</text>
<text x="0.700" y="16.600" font-family="Liberation Serif" font-weight="bold" font-size="9.500" fill="#c2a6a6">Я</text>
<path d="M12.500 2.500V14" stroke="#9aa9b4" stroke-width="1"/><path d="M9.700 12.600h5.600l-2.800 4z" fill="#9aa9b4"/></svg>
<svg style="left:134px;top:561px" width="17" height="18" viewBox="0 0 17 18">
<text x="0.700" y="7.800" font-family="Liberation Serif" font-weight="bold" font-size="9.500" fill="#c2a6a6">Я</text>
<text x="0.700" y="16.600" font-family="Liberation Serif" font-weight="bold" font-size="9.500" fill="#9fb2c0">A</text>
<path d="M12.500 2.500V14" stroke="#9aa9b4" stroke-width="1"/><path d="M9.700 12.600h5.600l-2.800 4z" fill="#9aa9b4"/></svg>
<div style="left:15px;top:583px;width:1227px;height:159px;border:1px solid #aea888;background:#fff"></div>
<div style="left:16px;top:584px;width:1227px;height:20px;background:#f6f3df"></div>
<div style="left:16px;top:584px;width:64px;height:20px;background:linear-gradient(90deg,#ebe5c8,#f6f3df)"></div>
<div style="left:1010px;top:584px;width:233px;height:20px;background:#d0ccb8"></div>
<div style="left:16px;top:604px;width:1227px;height:1px;background:#aea888"></div>
<div style="left:16px;top:623px;width:1227px;height:1px;background:#aea888"></div>
<div style="left:16px;top:642px;width:1227px;height:1px;background:#aea888"></div>
<div style="left:16px;top:661px;width:1227px;height:1px;background:#aea888"></div>
<div style="left:16px;top:680px;width:1227px;height:1px;background:#aea888"></div>
<div style="left:16px;top:699px;width:1227px;height:1px;background:#aea888"></div>
<div style="left:80px;top:584px;width:1px;height:116px;background:#aea888"></div>
<div style="left:312px;top:584px;width:1px;height:116px;background:#aea888"></div>
<div style="left:544px;top:584px;width:1px;height:116px;background:#aea888"></div>
<div style="left:825px;top:584px;width:1px;height:116px;background:#aea888"></div>
<div style="left:1009px;top:584px;width:1px;height:116px;background:#aea888"></div>
<div class="t" style="left:20px;top:587px;line-height:14px;color:#1c1a10">N</div>
<div class="t" style="left:85px;top:587px;line-height:14px;color:#1c1a10;letter-spacing:0.146px">Имя реквизита</div>
<div class="t" style="left:317px;top:587px;line-height:14px;color:#1c1a10;letter-spacing:0.085px">Имя поля файла</div>
<div class="t" style="left:829px;top:587px;line-height:14px;color:#1c1a10;letter-spacing:-0.092px">Ключевое</div>
<div class="t" style="left:1013px;top:587px;line-height:14px;color:#1c1a10;letter-spacing:0.061px">Соответствие значений</div>
<div class="t" style="left:16px;top:608px;width:59px;text-align:right;line-height:14px">1</div>
<div class="t" style="left:85px;top:608px;line-height:14px;letter-spacing:-0.164px">ЭтоГруппа</div>
<div class="t" style="left:316px;top:608px;line-height:14px">5</div>
<div class="t" style="left:548px;top:608px;line-height:14px;letter-spacing:0.078px">СтандартныеРеквизиты</div>
<div style="left:830px;top:607px;width:11px;height:11px;border:1px solid #aea888;background:#fff"></div>
<div class="t" style="left:16px;top:627px;width:59px;text-align:right;line-height:14px">2</div>
<div class="t" style="left:85px;top:627px;line-height:14px;letter-spacing:-0.087px">Родитель</div>
<div class="t" style="left:316px;top:627px;line-height:14px">4</div>
<div class="t" style="left:548px;top:627px;line-height:14px;letter-spacing:0.078px">СтандартныеРеквизиты</div>
<div style="left:830px;top:626px;width:11px;height:11px;border:1px solid #aea888;background:#fff"></div>
<div class="t" style="left:16px;top:646px;width:59px;text-align:right;line-height:14px">3</div>
<div class="t" style="left:85px;top:646px;line-height:14px;letter-spacing:-0.07px">Наименование</div>
<div class="t" style="left:316px;top:646px;line-height:14px">7</div>
<div class="t" style="left:548px;top:646px;line-height:14px;letter-spacing:0.078px">СтандартныеРеквизиты</div>
<div style="left:830px;top:645px;width:11px;height:11px;border:1px solid #aea888;background:#fff"></div>
<div class="t" style="left:16px;top:665px;width:59px;text-align:right;line-height:14px">4</div>
<div class="t" style="left:85px;top:665px;line-height:14px;letter-spacing:-0.006px">ВидКонтрагента</div>
<div class="t" style="left:316px;top:665px;line-height:14px">9</div>
<div class="t" style="left:548px;top:665px;line-height:14px;letter-spacing:0.324px">Реквизиты</div>
<div style="left:830px;top:664px;width:11px;height:11px;border:1px solid #aea888;background:#fff"></div>
<div class="t" style="left:16px;top:684px;width:59px;text-align:right;line-height:14px">5</div>
<div class="t" style="left:85px;top:684px;line-height:14px;letter-spacing:0.139px">ДатаРегистрации</div>
<div class="t" style="left:316px;top:684px;line-height:14px">26</div>
<div class="t" style="left:548px;top:684px;line-height:14px;letter-spacing:0.324px">Реквизиты</div>
<div style="left:830px;top:683px;width:11px;height:11px;border:1px solid #aea888;background:#fff"></div>
<div style="left:1010px;top:624px;width:233px;height:18px;background:#5068c0;outline:1px dotted #000;outline-offset:-1px"></div>
<div style="left:8px;top:744px;width:1237px;height:1px;background:#aea888"></div>
<div style="left:4px;top:745px;width:1245px;height:1px;background:#aea888"></div>
<div style="left:4px;top:746px;width:1245px;height:24px;background:#f2f2f2"></div>
<div class="t" style="left:1033px;top:751px;color:#4c3b12;line-height:16px;letter-spacing:0.002px">Обработка</div>
<svg style="left:1092px;top:756px" width="5" height="3"><path d="M0 0h5l-2.500 3z" fill="#4a3500"/></svg>
<div class="t" style="left:1105px;top:751px;color:#4c3b12;line-height:16px;font-weight:bold;font-size:12px;letter-spacing:1.0px">OK</div>
<div style="left:1129px;top:750px;width:1px;height:17px;background:#d4cfb6"></div>
<div style="left:1130px;top:750px;width:1px;height:17px;background:#fff"></div>
<div class="t" style="left:1137px;top:751px;color:#4c3b12;line-height:16px;letter-spacing:-0.002px">Записать</div>
<div style="left:1191px;top:750px;width:1px;height:17px;background:#d4cfb6"></div>
<div style="left:1192px;top:750px;width:1px;height:17px;background:#fff"></div>
<div class="t" style="left:1198px;top:751px;color:#4c3b12;line-height:16px;letter-spacing:0.271px">Закрыть</div>
<div style="left:395px;top:62px;width:1px;height:542px;background:#fff"></div>
<div style="left:395px;top:62px;width:408px;height:1px;background:#fff"></div>
<div style="left:396px;top:63px;width:407px;height:541px;background:#cccccc"></div>
<div style="left:802px;top:63px;width:1px;height:541px;background:#7a7a7a"></div>
<div style="left:396px;top:603px;width:407px;height:1px;background:#7a7a7a"></div>
<div class="t" style="left:403px;top:67px;font-weight:bold;font-size:12px;line-height:16px;color:#1c1c1c">Правила загрузки данных</div>
<svg style="left:783px;top:69px" width="13" height="12" viewBox="0 0 13 12"><path d="M1.8 1.300l9.400 9.400M11.200 1.300l-9.400 9.400" stroke="#2a2a2a" stroke-width="1.700"/></svg>
<div style="left:399px;top:84px;width:400px;height:516px;background:#fff"></div>
<div class="t" style="left:407px;top:95px;line-height:14px;letter-spacing:-0.055px">Тип данных:</div>
<div style="left:502px;top:92px;width:287px;height:17px;border:1px solid #aea888;background:#fff"><div class="t" style="left:3px;top:2px;line-height:13px;background:#5068c0;color:#fff;padding:0;letter-spacing:0.055px">Справочник.Контрагенты</div></div>
<div style="left:775px;top:93px;width:14px;height:17px;background:#f2f2f2;border-left:1px solid #aea888"><svg width="14" height="17" style="left:0;top:0"><path d="M3.600 7.0h7l-3.500 4z" fill="#5a4200"/></svg></div>
<div class="t" style="left:407px;top:119px;line-height:14px;letter-spacing:0.134px">Искать по:</div>
<div style="left:502px;top:116px;width:287px;height:17px;border:1px solid #aea888;background:#fff"></div>
<div style="left:775px;top:117px;width:14px;height:17px;background:#f2f2f2;border-left:1px solid #aea888"><svg width="14" height="17" style="left:0;top:0"><path d="M3.600 7.0h7l-3.500 4z" fill="#5a4200"/></svg></div>
<div class="t" style="left:407px;top:143px;line-height:14px;letter-spacing:-0.078px">Если не найден:</div>
<div style="left:502px;top:140px;width:287px;height:17px;border:1px solid #aea888;background:#fff"></div>
<div style="left:775px;top:141px;width:14px;height:17px;background:#f2f2f2;border-left:1px solid #aea888"><svg width="14" height="17" style="left:0;top:0"><path d="M3.600 7.0h7l-3.500 4z" fill="#5a4200"/></svg></div>
<svg style="left:411px;top:194px" width="16" height="16" viewBox="0 0 16 16">
<defs><radialGradient id="gp411194" cx="0.420" cy="0.350" r="0.750"><stop offset="0" stop-color="#c4e6a0"/><stop offset="0.550" stop-color="#78b956"/><stop offset="1" stop-color="#4f8f38"/></radialGradient></defs>
<circle cx="8" cy="8" r="7" fill="url(#gp411194)" stroke="#93a08b" stroke-width="1.100"/>
<path d="M8 4.400v7.400M4.300 8.100h7.400" stroke="#fff" stroke-width="2.100" stroke-linecap="round"/></svg>
<svg style="left:434px;top:194px" width="16" height="16" viewBox="0 0 16 16">
<path d="M3.500 4.700l8.700 8.100M12.200 4.700l-8.700 8.100" stroke="#e2554b" stroke-width="2.300" stroke-linecap="round"/>
<path d="M3.700 4.700l8.300 7.900M12 4.700l-8.300 7.900" stroke="#f59a92" stroke-width="0.900" stroke-linecap="round"/></svg>
<svg style="left:457px;top:194px" width="16" height="16" viewBox="0 0 16 16">
<defs><linearGradient id="gu457194" x1="0" y1="0" x2="0" y2="1"><stop offset="0" stop-color="#f2f9ff"/><stop offset="0.550" stop-color="#a9d2f5"/><stop offset="1" stop-color="#4f9de0"/></linearGradient></defs>
<path d="M7.700 2.300L13.700 8.400H10.500V13.100H4.900V8.400H1.700Z" fill="url(#gu457194)" stroke="#3379bd" stroke-width="1.100" stroke-linejoin="round"/></svg>
<svg style="left:480px;top:194px" width="16" height="16" viewBox="0 0 16 16">
<defs><linearGradient id="gd480194" x1="0" y1="0" x2="0" y2="1"><stop offset="0" stop-color="#b4dafa"/><stop offset="0.500" stop-color="#62a9ea"/><stop offset="1" stop-color="#3f8bd8"/></linearGradient></defs>
<path d="M7.600 13.900L13.700 7.600H10.400V2.700H4.800V7.600H1.500Z" fill="url(#gd480194)" stroke="#4a8ccc" stroke-width="1" stroke-linejoin="round"/></svg>
<svg style="left:503px;top:193px" width="17" height="18" viewBox="0 0 17 18">
<text x="0.700" y="7.800" font-family="Liberation Serif" font-weight="bold" font-size="9.500" fill="#1d609b">A</text>
<text x="0.700" y="16.600" font-family="Liberation Serif" font-weight="bold" font-size="9.500" fill="#a11c1c">Я</text>
<path d="M12.500 2.500V14" stroke="#1f3a52" stroke-width="1"/><path d="M9.700 12.600h5.600l-2.800 4z" fill="#1f3a52"/></svg>
<svg style="left:526px;top:193px" width="17" height="18" viewBox="0 0 17 18">
<text x="0.700" y="7.800" font-family="Liberation Serif" font-weight="bold" font-size="9.500" fill="#a11c1c">Я</text>
<text x="0.700" y="16.600" font-family="Liberation Serif" font-weight="bold" font-size="9.500" fill="#1d609b">A</text>
<path d="M12.500 2.500V14" stroke="#1f3a52" stroke-width="1"/><path d="M9.700 12.600h5.600l-2.800 4z" fill="#1f3a52"/></svg>
<div style="left:407px;top:216px;width:382px;height:349px;border:1px solid #aea888;background:#fff;overflow:hidden"></div>
<div style="left:408px;top:217px;width:366px;height:349px;overflow:hidden">
<div style="left:0px;top:0px;width:367px;height:20px;background:#f6f3df"></div>
<div style="left:0px;top:0px;width:121px;height:20px;background:#cfcab4"></div>
<div style="left:0px;top:21px;width:121px;height:18px;background:#5068c0"></div>
<div style="left:0px;top:20px;width:367px;height:1px;background:#aea888"></div>
<div style="left:0px;top:39px;width:367px;height:1px;background:#aea888"></div>
<div style="left:0px;top:58px;width:367px;height:1px;background:#aea888"></div>
<div style="left:0px;top:77px;width:367px;height:1px;background:#aea888"></div>
<div style="left:0px;top:96px;width:367px;height:1px;background:#aea888"></div>
<div style="left:0px;top:115px;width:367px;height:1px;background:#aea888"></div>
<div style="left:0px;top:134px;width:367px;height:1px;background:#aea888"></div>
<div style="left:0px;top:153px;width:367px;height:1px;background:#aea888"></div>
<div style="left:0px;top:172px;width:367px;height:1px;background:#aea888"></div>
<div style="left:0px;top:191px;width:367px;height:1px;background:#aea888"></div>
<div style="left:0px;top:210px;width:367px;height:1px;background:#aea888"></div>
<div style="left:0px;top:229px;width:367px;height:1px;background:#aea888"></div>
<div style="left:0px;top:248px;width:367px;height:1px;background:#aea888"></div>
<div style="left:0px;top:267px;width:367px;height:1px;background:#aea888"></div>
<div style="left:0px;top:286px;width:367px;height:1px;background:#aea888"></div>
<div style="left:0px;top:305px;width:367px;height:1px;background:#aea888"></div>
<div style="left:0px;top:324px;width:367px;height:1px;background:#aea888"></div>
<div style="left:0px;top:343px;width:367px;height:1px;background:#aea888"></div>
<div style="left:121px;top:0px;width:1px;height:349px;background:#aea888"></div>
<div style="left:243px;top:0px;width:1px;height:349px;background:#aea888"></div>
<div class="t" style="left:4px;top:3px;line-height:14px;color:#1c1a10;letter-spacing:-0.183px">Значение</div>
<div class="t" style="left:126px;top:3px;line-height:14px;color:#1c1a10;letter-spacing:-0.026px">Ссылка на значение</div>
<div class="t" style="left:248px;top:3px;line-height:14px;color:#1c1a10;letter-spacing:-0.018px">Добавить</div>
<div class="t" style="left:4px;top:24px;line-height:14px;color:#fff"><span style="letter-spacing:-0.051px">1.1 Частное лицо</span></div>
<div class="t" style="left:126px;top:24px;line-height:14px"><span style="letter-spacing:-0.051px">1.1 Частное лицо</span></div>
<div style="left:248px;top:23px;width:11px;height:11px;border:1px solid #aea888;background:#fff"></div>
<div class="t" style="left:4px;top:43px;line-height:14px;color:#000"><span style="letter-spacing:-0.218px">1.2 Юридическое лицо</span></div>
<div class="t" style="left:126px;top:43px;line-height:14px"><span style="letter-spacing:-0.218px">1.2 Юридическое лицо</span></div>
<div style="left:248px;top:42px;width:11px;height:11px;border:1px solid #aea888;background:#fff"></div>
<div class="t" style="left:4px;top:62px;line-height:14px;color:#000"><span style="letter-spacing:0.07px">Поставщики информ</span><span style="letter-spacing:-1.300px;color:#555">...</span></div>
<div class="t" style="left:126px;top:62px;line-height:14px"><span style="letter-spacing:0.07px">Поставщики информ</span><span style="letter-spacing:-1.300px;color:#555">...</span></div>
<div style="left:248px;top:61px;width:11px;height:11px;border:1px solid #aea888;background:#fff"></div>
<div class="t" style="left:4px;top:81px;line-height:14px;color:#000"><span style="letter-spacing:0.087px">Поставщики офисны</span><span style="letter-spacing:-1.300px;color:#555">...</span></div>
<div class="t" style="left:126px;top:81px;line-height:14px"><span style="letter-spacing:0.087px">Поставщики офисны</span><span style="letter-spacing:-1.300px;color:#555">...</span></div>
<div style="left:248px;top:80px;width:11px;height:11px;border:1px solid #aea888;background:#fff"></div>
<div class="t" style="left:4px;top:100px;line-height:14px;color:#000"><span style="letter-spacing:0.15px">Поставщики автоза</span><span style="letter-spacing:-1.300px;color:#555">...</span></div>
<div class="t" style="left:126px;top:100px;line-height:14px"><span style="letter-spacing:0.15px">Поставщики автоза</span><span style="letter-spacing:-1.300px;color:#555">...</span></div>
<div style="left:248px;top:99px;width:11px;height:11px;border:1px solid #aea888;background:#fff"></div>
<div class="t" style="left:4px;top:119px;line-height:14px;color:#000"><span style="letter-spacing:0.004px">Поставщики прочее</span></div>
<div class="t" style="left:126px;top:119px;line-height:14px"><span style="letter-spacing:0.004px">Поставщики прочее</span></div>
<div style="left:248px;top:118px;width:11px;height:11px;border:1px solid #aea888;background:#fff"></div>
<div class="t" style="left:4px;top:138px;line-height:14px;color:#000"><span style="letter-spacing:0.031px">3.2 Уволенные</span></div>
<div class="t" style="left:126px;top:138px;line-height:14px"><span style="letter-spacing:0.031px">3.2 Уволенные</span></div>
<div style="left:248px;top:137px;width:11px;height:11px;border:1px solid #aea888;background:#fff"></div>
<div class="t" style="left:4px;top:157px;line-height:14px;color:#000"><span style="letter-spacing:0.113px">Поставщики автосе</span><span style="letter-spacing:-1.300px;color:#555">...</span></div>
<div class="t" style="left:126px;top:157px;line-height:14px"><span style="letter-spacing:0.113px">Поставщики автосе</span><span style="letter-spacing:-1.300px;color:#555">...</span></div>
<div style="left:248px;top:156px;width:11px;height:11px;border:1px solid #aea888;background:#fff"></div>
<div class="t" style="left:4px;top:176px;line-height:14px;color:#000"><span style="letter-spacing:0.073px">4. Банк и Налоговые</span><span style="letter-spacing:-1.300px;color:#555">...</span></div>
<div style="left:248px;top:175px;width:11px;height:11px;border:1px solid #aea888;background:#fff"><svg width="11" height="11" viewBox="0 0 11 11" style="left:0;top:0"><path d="M2 3.800L4.500 6.300 9 1.800V4.800L4.500 9.300 2 6.800Z" fill="#000"/></svg></div>
<div class="t" style="left:4px;top:195px;line-height:14px;color:#000"><span style="letter-spacing:0.188px">Поставщики коммун</span><span style="letter-spacing:-1.300px;color:#555">...</span></div>
<div class="t" style="left:126px;top:195px;line-height:14px"><span style="letter-spacing:0.188px">Поставщики коммун</span><span style="letter-spacing:-1.300px;color:#555">...</span></div>
<div style="left:248px;top:194px;width:11px;height:11px;border:1px solid #aea888;background:#fff"></div>
<div class="t" style="left:4px;top:214px;line-height:14px;color:#000"><span style="letter-spacing:0.16px">Поставщики автомо</span><span style="letter-spacing:-1.300px;color:#555">...</span></div>
<div class="t" style="left:126px;top:214px;line-height:14px"><span style="letter-spacing:0.16px">Поставщики автомо</span><span style="letter-spacing:-1.300px;color:#555">...</span></div>
<div style="left:248px;top:213px;width:11px;height:11px;border:1px solid #aea888;background:#fff"></div>
<div class="t" style="left:4px;top:233px;line-height:14px;color:#000"><span style="letter-spacing:-0.116px">3.1.3. Слесарный Цех</span></div>
<div class="t" style="left:126px;top:233px;line-height:14px"><span style="letter-spacing:-0.116px">3.1.3. Слесарный Цех</span></div>
<div style="left:248px;top:232px;width:11px;height:11px;border:1px solid #aea888;background:#fff"></div>
<div class="t" style="left:4px;top:252px;line-height:14px;color:#000"><span style="letter-spacing:0.2px">Поставщики стройм</span><span style="letter-spacing:-1.300px;color:#555">...</span></div>
<div class="t" style="left:126px;top:252px;line-height:14px"><span style="letter-spacing:0.2px">Поставщики стройм</span><span style="letter-spacing:-1.300px;color:#555">...</span></div>
<div style="left:248px;top:251px;width:11px;height:11px;border:1px solid #aea888;background:#fff"></div>
<div class="t" style="left:4px;top:271px;line-height:14px;color:#000"><span style="letter-spacing:0.106px">Поставщики субпод</span><span style="letter-spacing:-1.300px;color:#555">...</span></div>
<div class="t" style="left:126px;top:271px;line-height:14px"><span style="letter-spacing:0.106px">Поставщики субпод</span><span style="letter-spacing:-1.300px;color:#555">...</span></div>
<div style="left:248px;top:270px;width:11px;height:11px;border:1px solid #aea888;background:#fff"></div>
<div class="t" style="left:4px;top:290px;line-height:14px;color:#000"><span style="letter-spacing:0.005px">3.1.4. Кузовной цех</span></div>
<div class="t" style="left:126px;top:290px;line-height:14px"><span style="letter-spacing:0.005px">3.1.4. Кузовной цех</span></div>
<div style="left:248px;top:289px;width:11px;height:11px;border:1px solid #aea888;background:#fff"></div>
<div class="t" style="left:4px;top:309px;line-height:14px;color:#000"><span style="letter-spacing:-0.147px">3.1.6. Обслуживающ</span><span style="letter-spacing:-1.300px;color:#555">...</span></div>
<div class="t" style="left:126px;top:309px;line-height:14px"><span style="letter-spacing:-0.147px">3.1.6. Обслуживающ</span><span style="letter-spacing:-1.300px;color:#555">...</span></div>
<div style="left:248px;top:308px;width:11px;height:11px;border:1px solid #aea888;background:#fff"></div>
<div class="t" style="left:4px;top:328px;line-height:14px;color:#000"><span style="letter-spacing:0.004px">3.1.5. Автомойка</span></div>
<div class="t" style="left:126px;top:328px;line-height:14px"><span style="letter-spacing:0.004px">3.1.5. Автомойка</span></div>
<div style="left:248px;top:327px;width:11px;height:11px;border:1px solid #aea888;background:#fff"></div>
<div style="left:248px;top:346px;width:11px;height:11px;border:1px solid #aea888;background:#fff"></div>
</div>
<div style="left:774px;top:217px;width:15px;height:349px;background:#fbfaf4;border-left:1px solid #aea888"></div>
<div style="left:775px;top:217px;width:15px;height:20px;background:linear-gradient(90deg,#fdfcf6,#f3efd8 55%,#ebe4c6)"><svg width="15" height="20" style="left:0;top:0"><path d="M4 13h7l-3.500-7z" fill="#cac6ba"/></svg></div>
<div style="left:775px;top:237px;width:15px;height:1px;background:#aea888"></div>
<div style="left:775px;top:238px;width:15px;height:204px;background:linear-gradient(90deg,#f9f5e8,#f1ecd0 50%,#e6dec0)"></div>
<svg style="left:780px;top:338px" width="5" height="5"><circle cx="2.500" cy="2.500" r="2.300" fill="#d0cbb8"/><circle cx="3.100" cy="3.100" r="1.300" fill="#efead6"/></svg>
<div style="left:775px;top:442px;width:15px;height:1px;background:#aea888"></div>
<div style="left:775px;top:545px;width:15px;height:1px;background:#aea888"></div>
<div style="left:775px;top:546px;width:15px;height:20px;background:linear-gradient(90deg,#fdfcf6,#f3efd8 55%,#ebe4c6)"><svg width="15" height="20" style="left:0;top:0"><path d="M4 7h7l-3.500 7z" fill="url(#gtd)"/></svg></div>
<div style="left:399px;top:575px;width:400px;height:1px;background:#aea888"></div>
<div style="left:399px;top:576px;width:400px;height:24px;background:#f2f2f2"></div>
<svg style="left:722px;top:580px" width="15" height="15" viewBox="0 0 15 15">
<defs><linearGradient id="gsv" x1="0" y1="0" x2="1" y2="0.300"><stop offset="0" stop-color="#b4cfe9"/><stop offset="0.600" stop-color="#6f9bc8"/><stop offset="1" stop-color="#45739f"/></linearGradient>
<linearGradient id="gsh" x1="0" y1="0" x2="1" y2="0"><stop offset="0" stop-color="#8e9aa6"/><stop offset="0.400" stop-color="#e6e9ec"/><stop offset="1" stop-color="#c4c9ce"/></linearGradient></defs>
<rect x="0.500" y="0.500" width="14" height="14" rx="1.200" fill="url(#gsv)" stroke="#4d7aa8" stroke-width="0.900"/>
<rect x="2.500" y="1" width="9.500" height="5.500" fill="#fcfdfe"/><path d="M3.500 2.500h7.500M3.500 4.500h7.500" stroke="#b5d3e6" stroke-width="0.900"/>
<rect x="3" y="8.500" width="8.500" height="5.500" fill="url(#gsh)"/><rect x="4.300" y="9.800" width="2" height="3.400" fill="#3d4f63"/></svg>
<div class="t" style="left:739px;top:581px;color:#4c3b12;line-height:16px;letter-spacing:-0.146px">Сохранить</div>
</div></body></html>
